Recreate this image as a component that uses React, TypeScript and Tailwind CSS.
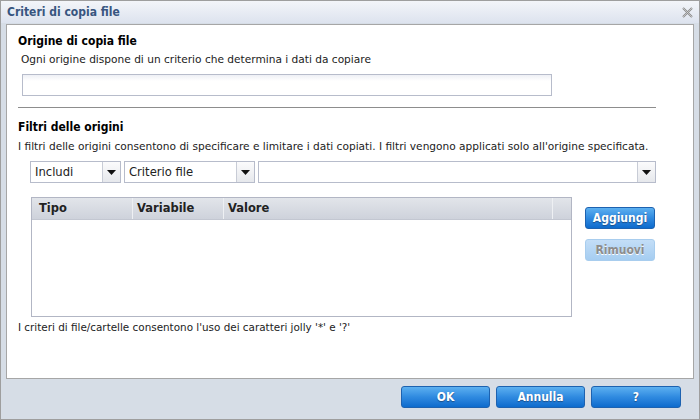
import React from "react";

const font = { fontFamily: '"DejaVu Sans Condensed", "DejaVu Sans", sans-serif' };
const reg = { fontFamily: '"DejaVu Sans", sans-serif' };

function Select({ label, w }: { label: string; w: string }) {
  return (
    <div className={`flex h-[22px] ${w} border border-[#b7bccb] bg-white`}>
      <div style={reg} className="flex-1 pl-[4px] text-[11.6px] leading-[20px] text-[#222]">{label}</div>
      <div className="flex w-[18px] items-center justify-center border-l border-[#c8ccd6] bg-gradient-to-b from-[#fbfbfc] to-[#e6e8ec]">
        <svg width="9" height="5" viewBox="0 0 9 5"><path d="M0 0h9L4.5 5z" fill="#111" /></svg>
      </div>
    </div>
  );
}

function BlueBtn({ label, w, disabled }: { label: string; w: string; disabled?: boolean }) {
  return (
    <div
      className={`flex h-[22px] ${w} items-center justify-center rounded-[3px] border text-[12px] font-bold ${
        disabled
          ? "border-[#a8cdee] bg-gradient-to-b from-[#c3def7] to-[#a5cdf1] text-[#8d8d8d] [text-shadow:0_1px_0_#fff]"
          : "border-[#1d62b0] bg-gradient-to-b from-[#5cb0f0] via-[#2f8ae0] to-[#0c6bcd] text-white [text-shadow:0_1px_1px_#1b4f8a]"
      }`}
    >
      {label}
    </div>
  );
}

export default function App() {
  return (
    <div style={font} className="flex h-[420px] w-[700px] flex-col border border-[#9e9e9e] bg-[#d6dde6]">
      <div className="flex h-[22px] items-center justify-between bg-gradient-to-b from-[#f3f5f9] to-[#dde3ee] pl-[6px] pr-[6px]">
        <span className="text-[12px] font-bold text-[#38557f]">Criteri di copia file</span>
        <svg width="11" height="11" viewBox="0 0 11 11">
          <path d="M1 1L10 10M10 1L1 10" stroke="#8a8a8a" strokeWidth="2" />
          <path d="M1 1L10 10M10 1L1 10" stroke="#d8d8d8" strokeWidth="0.7" />
        </svg>
      </div>
      <div className="mx-[5px] mt-[1px] flex h-[355px] flex-col border border-[#a6a6a6] bg-white px-[11px] text-[#222]">
        <div className="mt-[8px] text-[12px] font-bold leading-[16px] text-black">Origine di copia file</div>
        <div style={reg} className="mt-[2px] pl-[3px] text-[10.6px] leading-[16px]">
          Ogni origine dispone di un criterio che determina i dati da copiare
        </div>
        <div className="ml-[4px] mt-[7px] h-[22px] w-[530px] border border-[#b7bccb] bg-gradient-to-b from-[#eef0f5] to-white to-[30%]" />
        <div className="mt-[11px] h-px w-[638px] bg-[#8d8d8d]" />
        <div className="mt-[11px] text-[12px] font-bold leading-[16px] text-black">Filtri delle origini</div>
        <div style={reg} className="mt-[3px] text-[10.6px] leading-[16px]">
          I filtri delle origini consentono di specificare e limitare i dati copiati. I filtri vengono applicati solo all'origine specificata.
        </div>
        <div className="ml-[12px] mt-[7px] flex">
          <Select label="Includi" w="w-[91px]" />
          <div className="w-[3px]" />
          <Select label="Criterio file" w="w-[131px]" />
          <div className="w-[3px]" />
          <Select label="" w="w-[398px]" />
        </div>
        <div className="mt-[14px] flex">
          <div className="ml-[13px] flex h-[120px] w-[541px] flex-col border border-[#b2b6c4]">
            <div
              style={reg}
              className="flex h-[22px] border-b border-[#c3c7d1] bg-gradient-to-b from-[#e2e5ea] to-[#ced2db] text-[11.5px] font-bold leading-[21px] text-[#222]"
            >
              <div className="w-[101px] border-r border-[#eef0f3] pl-[7px]">Tipo</div>
              <div className="w-[91px] border-r border-[#eef0f3] pl-[4px]">Variabile</div>
              <div className="w-[329px] border-r border-[#eef0f3] pl-[4px]">Valore</div>
              <div className="flex-1" />
            </div>
          </div>
          <div className="ml-[13px] mt-[10px] flex flex-col gap-[10px]">
            <BlueBtn label="Aggiungi" w="w-[70px]" />
            <BlueBtn label="Rimuovi" w="w-[70px]" disabled />
          </div>
        </div>
        <div style={reg} className="mt-[2px] text-[10.4px] leading-[16px]">
          I criteri di file/cartelle consentono l'uso dei caratteri jolly '*' e '?'
        </div>
      </div>
      <div className="mr-[18px] mt-[7px] flex justify-end gap-[6px]">
        <BlueBtn label="OK" w="w-[89px]" />
        <BlueBtn label="Annulla" w="w-[89px]" />
        <BlueBtn label="?" w="w-[90px]" />
      </div>
    </div>
  );
}
